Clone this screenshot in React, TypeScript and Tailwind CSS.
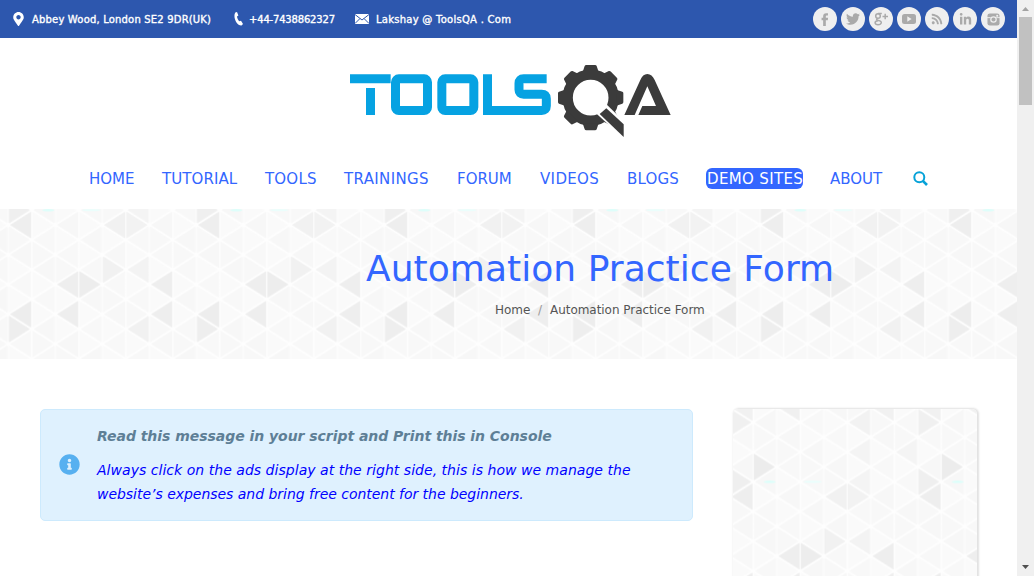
import React from "react";
import { FaTwitter, FaLinkedinIn, FaInfoCircle, FaRss, FaMapMarkerAlt } from "react-icons/fa";

type Tri = [strip: number, row: number, dir: "L" | "R", fill: string];
const SHADED: Tri[] = [
  [0, -6, "L", "#f1f1f1"], [2, -6, "L", "#f0f0f0"], [6, -6, "L", "#f1f1f1"],
  [0, -5, "R", "#f0f0f0"], [5, -5, "L", "#f2f2f2"], [1, -2, "R", "#ececec"],
  [0, -1, "R", "#efefef"], [5, -1, "L", "#f4f4f4"], [5, -3, "L", "#f4f4f4"], [7, -3, "L", "#f4f4f4"],
  [0, 0, "L", "#eeeeee"], [4, 0, "L", "#f1f1f1"], [5, 0, "R", "#f2f2f2"],
  [4, 3, "R", "#f1f1f1"], [5, 3, "L", "#f3f3f3"],
  [2, 4, "L", "#eeeeee"], [3, 4, "R", "#ededed"], [6, 4, "L", "#eeeeee"],
  [0, 6, "L", "#ededed"], [2, 6, "L", "#eeeeee"], [6, 6, "L", "#eeeeee"],
  [0, 7, "R", "#eeeeee"], [5, 7, "L", "#f1f1f1"],
];

function Triangles({ x0, y0, id }: { x0: number; y0: number; id: string }) {
  const W = 23.5;
  const H = 14.87;
  const shapes: React.ReactNode[] = [];
  for (let s = 0; s < 8; s++) {
    for (let r = -8; r <= 12; r++) {
      const even = (s + r) % 2 === 0;
      const dir = even ? "L" : "R";
      const hit = SHADED.find((t) => t[0] === s && t[1] === r && t[2] === dir);
      const fill = hit ? hit[3] : even ? ((s * 3 + r) % 4 ? "#f7f7f7" : "#f8f8f8") : (s + r * 2 + 40) % 3 ? "#fafafa" : "#f8f8f8";
      const y = (r + 8) * H;
      const l = s * W;
      const pts = even
        ? `${l + 2.4},${y} ${l + W - 1},${y - H + 2.1} ${l + W - 1},${y + H - 2.1}`
        : `${l + W - 2.4},${y} ${l + 1},${y - H + 2.1} ${l + 1},${y + H - 2.1}`;
      shapes.push(<polygon key={`${s}:${r}`} points={pts} fill={fill} stroke={fill} strokeWidth="0.9" strokeLinejoin="round" />);
    }
  }
  return (
    <svg className="absolute inset-0 h-full w-full" aria-hidden="true">
      <defs>
        <pattern id={id} x={x0} y={y0 - 8 * H} width={188} height={20 * H} patternUnits="userSpaceOnUse">
          <rect width="188" height="300" fill="#fefefe" />
          {shapes}
          <ellipse cx="40" cy={7 * H} rx="6" ry="1.2" fill="#dcfffb" />
          <ellipse cx="83" cy={7 * H} rx="9" ry="1" fill="#e9fffd" />
        </pattern>
      </defs>
      <rect width="100%" height="100%" fill={`url(#${id})`} />
    </svg>
  );
}

function Logo() {
  return (
    <svg viewBox="0 0 1020 270" className="h-[90px] w-[340px]" aria-label="ToolsQA">
      <g fill="none" stroke="#06a2e2" strokeWidth="27">
        <path d="M30 68.500H152M91.500 96V177" />
        <rect x="166.500" y="68.500" width="96" height="95" rx="10" />
        <rect x="305.500" y="68.500" width="96" height="95" rx="10" />
        <path d="M620 68.500H551Q537 68.500 537 82V101Q537 114.500 551 114.500H605Q619 114.500 619 128V150Q619 163.500 605 163.500H442.500V55" />
      </g>
      <g fill="#3b3b3b">
        <circle cx="752" cy="125" r="69" fill="none" stroke="#3b3b3b" strokeWidth="31" />
        {[0, 45, 90, 135, 180, 225, 270, 315].map((a) => (
          <path key={a} transform={`rotate(${a} 752 125)`} d="M728 48L734 30Q735 27 739 27H765Q769 27 770 30L776 48Z" />
        ))}
        <path d="M768 172L796 142L870 214V265Z" fill="#fff" />
        <path d="M779 174L799 157L851 205V243Z" />
        <path d="M853 177L901 72Q908 54 922 54Q936 54 944 72L992 177H895L907 150H948L922 91L884 177Z" />
      </g>
    </svg>
  );
}

const Facebook = () => (
  <svg viewBox="0 0 8 14" className="h-[13px] w-[8px]" fill="currentColor">
    <path d="M2 14V7.700H.300V5.200H2V3.500C2 1.200 3.200.200 5.200.200H7.200V2.700H6C5.100 2.700 4.900 3.100 4.900 3.900V5.200H7.300L7 7.700H4.900V14Z" />
  </svg>
);
const GPlus = () => (
  <svg viewBox="0 0 16 16" className="h-4 w-4" fill="none" stroke="currentColor" strokeWidth="1.500">
    <ellipse cx="5" cy="5" rx="2.300" ry="2.300" />
    <path d="M5 2.600H8.800M4.500 7.300C2.800 8.300 4 9.100 5.500 9.400C10 10.400 8.500 13.700 5 13.700C1 13.700 1.300 10 5 9.800M12.200 2.800V8.200M9.500 5.500H15" />
  </svg>
);
const Play = () => (
  <svg viewBox="0 0 14 10" className="h-[10px] w-[14px]">
    <rect width="14" height="10" rx="2.500" fill="currentColor" />
    <path d="M5.300 2.200L9.600 5L5.300 7.800Z" fill="#efefef" />
  </svg>
);
const Insta = () => (
  <svg viewBox="0 0 14 14" className="h-[13px] w-[13px]">
    <rect x="0.500" y="0.500" width="13" height="13" rx="2.500" fill="currentColor" />
    <path d="M0 5H4M10 5H14" stroke="#efefef" />
    <circle cx="7" cy="7" r="2.900" fill="none" stroke="#efefef" strokeWidth="1.300" />
    <rect x="10" y="2" width="2" height="2" fill="#efefef" />
  </svg>
);

const SOCIAL = [
  <Facebook />, <FaTwitter size={14} />, <GPlus />, <Play />,
  <FaRss size={12} />, <FaLinkedinIn size={13} />, <Insta />,
];

const NAV: [string, string][] = [
  ["HOME", "w-[73px]"], ["TUTORIAL", "w-[103px] tracking-[0.07px]"], ["TOOLS", "w-[79px] tracking-[0.2px]"],
  ["TRAININGS", "w-[113px] tracking-[0.35px]"], ["FORUM", "w-[83px]"], ["VIDEOS", "w-[87px] tracking-[0.35px]"],
  ["BLOGS", "w-[79px] tracking-[0.2px]"],
];

export default function App() {
  return (
    <div className="flex h-[576px] w-[1034px] overflow-hidden bg-white font-['DejaVu_Sans',sans-serif]">
      <div className="flex w-[1017px] shrink-0 flex-col">
        <div className="flex h-[38px] shrink-0 items-center bg-[#2d57ae] text-[10px] text-white">
          <div className="flex w-[234px] items-center pl-[11px]">
            <FaMapMarkerAlt size={14} className="mr-[6px] w-[15px]" />
            <span className="tracking-[0.18px] whitespace-nowrap [-webkit-text-stroke:0.35px_white]">Abbey Wood, London SE2 9DR(UK)</span>
          </div>
          <div className="flex w-[121px] items-center">
            <svg viewBox="0 0 9 14" className="h-[14px] w-[9px]" fill="currentColor">
              <path d="M1.300.600L3 0L4.400 3.500L3 4.600C3.200 6.500 4 8 5.300 9.300L7 8.800L9 12L7.500 13.500C3 14-1.500 5 1.300.600Z" />
            </svg>
            <span className="ml-1.5 tracking-[-0.18px] whitespace-nowrap [-webkit-text-stroke:0.35px_white]">+44-7438862327</span>
          </div>
          <div className="flex grow items-center">
            <svg viewBox="0 0 14 10" className="h-[10px] w-[14px]">
              <rect width="14" height="10" fill="#fff" />
              <path d="M0 .500L7 6L14 .500M0 9.500L5 4.500M14 9.500L9 4.500" fill="none" stroke="#2d57ae" />
            </svg>
            <span className="ml-[7px] tracking-[0.26px] whitespace-nowrap [-webkit-text-stroke:0.35px_white]">Lakshay @ ToolsQA . Com</span>
          </div>
          <div className="mr-3 flex gap-1">
            {SOCIAL.map((icon, i) => (
              <span key={i} className="flex h-6 w-6 items-center justify-center rounded-full bg-[#efefef] text-[#aaaaaa]">{icon}</span>
            ))}
          </div>
        </div>

        <header className="flex h-[171px] shrink-0 flex-col">
          <div className="pt-[18px] pl-[340px]"><Logo /></div>
          <nav className="mt-[22px] flex h-[21px] items-center pl-[89px] text-[15px] leading-[21px] text-[#3366ff]">
            {NAV.map(([label, w]) => <a key={label} className={`${w} shrink-0 pt-0.5 whitespace-nowrap`}>{label}</a>)}
            <a className="h-[21px] w-[97px] rounded-[6px] bg-[#3366ff] pt-px pl-px tracking-[0.35px] whitespace-nowrap text-white">DEMO SITES</a>
            <a className="ml-[27px] w-[83px] pt-0.5">ABOUT</a>
            <svg viewBox="0 0 15 15" className="h-[15px] w-[15px]" fill="none" stroke="#06a2d8" strokeWidth="2">
              <circle cx="6.300" cy="6.300" r="5" /><path d="M9.800 9.800L14 14" strokeWidth="2.600" />
            </svg>
          </nav>
        </header>

        <section className="relative h-[150px] shrink-0">
          <Triangles id="hero" x0={8.3} y0={16} />
          <div className="relative pt-[37px] pl-[366px]">
            <h1 className="text-[36px] leading-[46px] tracking-[0.05px] whitespace-nowrap text-[#3366ff]">Automation Practice Form</h1>
            <div className="mt-2 ml-[129px] flex text-[12px] leading-5 whitespace-nowrap text-[#555]">
              <span className="w-[43px]">Home</span><span className="w-3 text-[#999]">/</span><span className="tracking-[-0.04px]">Automation Practice Form</span>
            </div>
          </div>
        </section>

        <main className="flex grow items-start pt-[50px] pl-10">
          <div className="flex h-[112px] w-[653px] shrink-0 items-center rounded-[5px] border border-[#cdeafd] bg-[#dff1fe] pl-[18px]">
            <FaInfoCircle size={21} className="mb-0.5 shrink-0 text-[#57b0f0]" />
            <div className="ml-[17px] text-[14px] leading-6 whitespace-nowrap italic">
              <p className="font-bold tracking-[-0.04px] text-[#5e7f96]">Read this message in your script and Print this in Console</p>
              <p className="mt-[10px] tracking-[0.035px] text-[#0000ff]">Always click on the ads display at the right side, this is how we manage the</p>
              <p className="tracking-[-0.03px] text-[#0000ff]">website’s expenses and bring free content for the beginners.</p>
            </div>
          </div>
          <aside className="relative ml-10 h-[220px] w-[244px] overflow-hidden rounded-t-[5px] shadow-[1px_0_2px_1px_#e2e2e2]">
            <Triangles id="side" x0={-3.3} y0={87.7} />
          </aside>
        </main>
      </div>

      <div className="flex w-[17px] flex-col items-center bg-[#f0f0f0]">
        <svg viewBox="0 0 17 17" className="h-[17px] w-[17px]"><path d="M5 11L8.500 7L12 11Z" fill="#a3a3a3" /></svg>
        <div className="h-[88px] w-[13px] bg-[#c1c1c1]" />
        <svg viewBox="0 0 17 17" className="mt-auto h-[17px] w-[17px]"><path d="M5 6L8.500 10L12 6Z" fill="#505050" /></svg>
      </div>
    </div>
  );
}
